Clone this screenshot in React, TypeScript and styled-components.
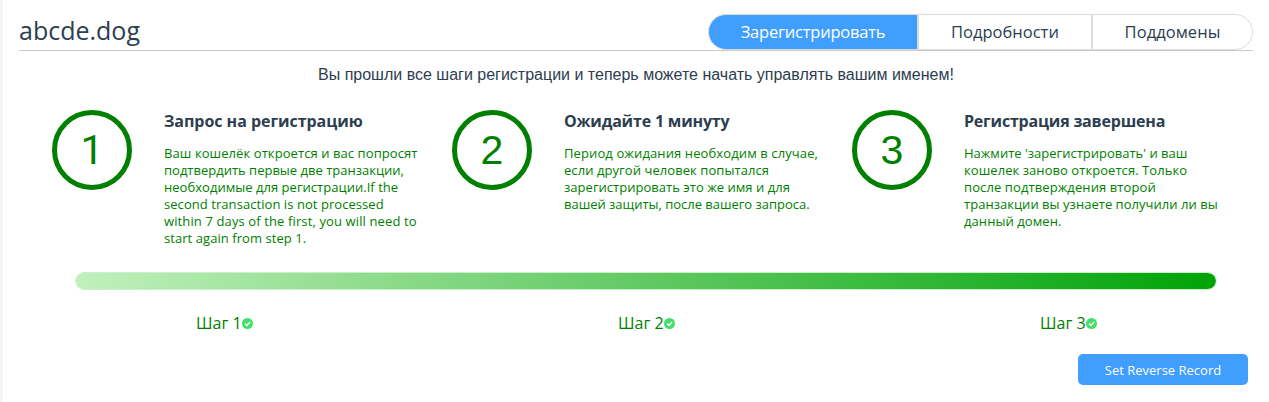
import React from 'react';
import styled, { createGlobalStyle } from 'styled-components';

const GlobalStyle = createGlobalStyle`
  *, *::before, *::after { box-sizing: border-box; }
  body {
    margin: 0;
    background: #fff;
    color: #2c3e50;
    font-family: "Open Sans", "Noto Sans", sans-serif;
  }
  h1, h2, p { margin: 0; font-weight: 400; }
`;

const Page = styled.main`
  height: 402px;
  overflow: hidden;
  padding: 14px 16px 0;
  border-left: 3px solid #f5f5f5;
`;

const Header = styled.header`
  display: flex;
  justify-content: space-between;
  height: 37px;
  border-bottom: 1px solid #c8c9ca;
`;

const Domain = styled.h1`
  font-size: 25px;
  line-height: 32px;
`;

const Tabs = styled.nav`
  display: flex;
  width: 545px;
  height: 36px;
`;

const Tab = styled.button<{ $active?: boolean; $width: number; $tracking: number }>`
  width: ${p => p.$width}px;
  height: 36px;
  padding: 0;
  border: 1px solid #dcdcdc;
  background: ${p => (p.$active ? '#409eff' : '#fff')};
  color: ${p => (p.$active ? '#fff' : '#2c3e50')};
  font: 16.5px/34px "Open Sans", "Noto Sans", sans-serif;
  letter-spacing: ${p => p.$tracking}px;
  white-space: nowrap;
  &:first-child { border-radius: 18px 0 0 18px; }
  &:last-child { border-radius: 0 18px 18px 0; }
`;

const Notice = styled.p`
  margin-top: 14px;
  text-align: center;
  font: 16px/20px "Liberation Sans", Arial, sans-serif;
`;

const Steps = styled.section`
  display: grid;
  grid-template-columns: repeat(3, 400px);
  height: 162px;
  padding-left: 33px;
  margin-top: 25px;
`;

const Step = styled.article`
  display: flex;
  gap: 32px;
`;

const Circle = styled.div<{ $font: string }>`
  flex: none;
  width: 80px;
  height: 80px;
  border: 5px solid #008000;
  border-radius: 50%;
  color: #008000;
  text-align: center;
  font: 41px/70px ${p => p.$font}, Arial, sans-serif;
`;

const StepTitle = styled.h2<{ $tracking: number }>`
  font-size: 16px;
  font-weight: 700;
  line-height: 22px;
  letter-spacing: ${p => p.$tracking}px;
  white-space: nowrap;
`;

const StepText = styled.p`
  margin-top: 13px;
  color: #008000;
  font-size: 13px;
  line-height: 17px;
`;

const Line = styled.span<{ $tracking: number }>`
  display: block;
  letter-spacing: ${p => p.$tracking}px;
  white-space: nowrap;
`;

const Progress = styled.div`
  width: 1142px;
  height: 18px;
  margin: 0 0 0 56px;
  border: 1px solid #c9f1c9;
  border-radius: 9px;
  background: linear-gradient(to right, #c1f0bc, #00a308) border-box;
  background-clip: padding-box;
`;

const Labels = styled.div`
  display: grid;
  grid-template-columns: repeat(3, 422px);
  margin-top: 21px;
  padding-left: 177px;
`;

const Label = styled.div`
  display: flex;
  align-items: center;
  height: 24px;
  color: #008000;
  font-size: 16px;
  line-height: 24px;
`;

const LabelText = styled.span`
  width: 46px;
  white-space: nowrap;
`;

const Check = styled.svg`
  width: 11px;
  height: 11px;
  margin-top: 1px;
`;

const Actions = styled.footer`
  display: flex;
  justify-content: flex-end;
  margin-top: 19px;
  padding-right: 5px;
`;

const PrimaryButton = styled.button`
  width: 170px;
  height: 31px;
  padding: 1px 0 0;
  border: 0;
  border-radius: 5px;
  background: #409eff;
  color: #fff;
  font: 13px/30px "Open Sans", "Noto Sans", sans-serif;
`;

const CheckIcon = () => (
  <Check viewBox="0 0 11 11" aria-hidden="true">
    <circle cx="5.5" cy="5.5" r="5.5" fill="#42e068" />
    <path d="M3 5.6 4.8 7.4 8.1 4.1" fill="none" stroke="#fff" strokeWidth="1.4" />
  </Check>
);

type TextLine = [string, number];

const steps: { font: string; title: TextLine; lines: TextLine[] }[] = [
  {
    font: 'Roboto',
    title: ['Запрос на регистрацию', -0.04],
    lines: [
      ['Ваш кошелёк откроется и вас попросят', 0.08],
      ['подтвердить первые две транзакции,', 0],
      ['необходимые для регистрации.If the', 0.03],
      ['second transaction is not processed', 0.06],
      ['within 7 days of the first, you will need to', 0.12],
      ['start again from step 1.', 0.06],
    ],
  },
  {
    font: '"Liberation Sans"',
    title: ['Ожидайте 1 минуту', -0.18],
    lines: [
      ['Период ожидания необходим в случае,', 0.11],
      ['если другой человек попытался', 0.07],
      ['зарегистрировать это же имя и для', 0.03],
      ['вашей защиты, после вашего запроса.', -0.02],
    ],
  },
  {
    font: '"Liberation Sans"',
    title: ['Регистрация завершена', -0.19],
    lines: [
      ["Нажмите 'зарегистрировать' и ваш", 0],
      ['кошелек заново откроется. Только', 0.06],
      ['после подтверждения второй', 0.1],
      ['транзакции вы узнаете получили ли вы', 0.03],
      ['данный домен.', 0.07],
    ],
  },
];

export default function App() {
  return (
    <>
      <GlobalStyle />
      <Page>
        <Header>
          <Domain>abcde.dog</Domain>
          <Tabs>
            <Tab $active $width={210} $tracking={-0.22}>Зарегистрировать</Tab>
            <Tab $width={174} $tracking={0}>Подробности</Tab>
            <Tab $width={161} $tracking={0.05}>Поддомены</Tab>
          </Tabs>
        </Header>
        <Notice>Вы прошли все шаги регистрации и теперь можете начать управлять вашим именем!</Notice>
        <Steps>
          {steps.map((step, i) => (
            <Step key={i}>
              <Circle $font={step.font}>{i + 1}</Circle>
              <div>
                <StepTitle $tracking={step.title[1]}>{step.title[0]}</StepTitle>
                <StepText>
                  {step.lines.map(([text, tracking]) => (
                    <Line key={text} $tracking={tracking}>{text} </Line>
                  ))}
                </StepText>
              </div>
            </Step>
          ))}
        </Steps>
        <Progress />
        <Labels>
          {[1, 2, 3].map(n => (
            <Label key={n}>
              <LabelText>Шаг {n}</LabelText>
              <CheckIcon />
            </Label>
          ))}
        </Labels>
        <Actions>
          <PrimaryButton>Set Reverse Record</PrimaryButton>
        </Actions>
      </Page>
    </>
  );
}
